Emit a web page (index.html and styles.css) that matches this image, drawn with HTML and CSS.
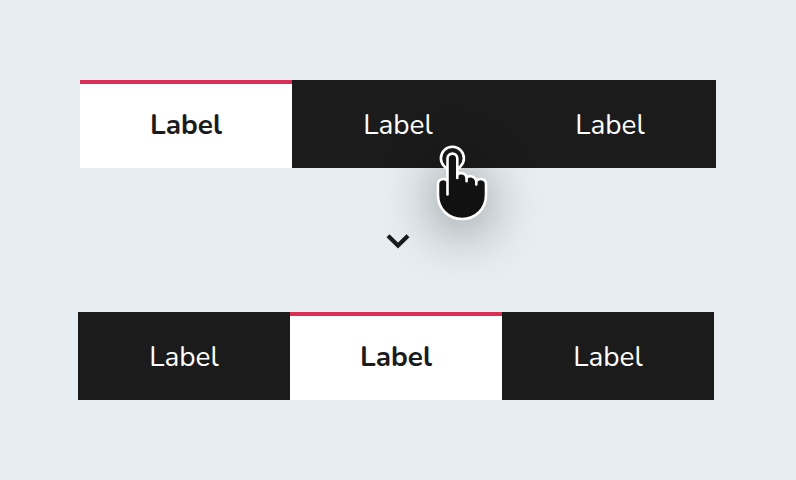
FILE: index.html
```html
<!DOCTYPE html>
<html lang="en"><head><meta charset="utf-8"><title>Tabs</title><link rel="stylesheet" href="styles.css"></head>
<body>
<main class="stage">
<nav class="tabs"><a class="tab active">Label</a><a class="tab">Label</a><a class="tab">Label</a></nav>
<svg class="chevron" width="24" height="16" viewBox="0 0 24 16"><path d="M2 3.800 12 13.600 22 3.800"/></svg>
<nav class="tabs second"><a class="tab">Label</a><a class="tab active">Label</a><a class="tab">Label</a></nav>
<svg class="pointer" width="64" height="84" viewBox="0 0 64 84">
<circle cx="22.400" cy="18.300" r="11.500"/>
<path class="hand" d="M17.500 54.500V18.500a4.900 4.900 0 0 1 9.800 0V34.500C29.500 32.300 35.500 32.500 36.600 37.500C39.500 35 45.300 36 46.300 41C49 37.700 56 38.500 56 44V55C56 69 45.500 79 32 79S8 69 8 55V44C8 38.500 15.500 37.500 17.500 41.500"/>
<path class="folds" d="M27.300 34V38M36.600 37.500V41.200M46.300 41V44.500"/>
</svg>
</main>
</body></html>
```
FILE: styles.css
```css
body{margin:0;background:#e7edf1;font-family:"Nunito",sans-serif}
.stage{position:relative;box-sizing:border-box;height:480px;padding:80px;display:flex;flex-direction:column;justify-content:space-between;align-items:center}
.tabs{display:flex;width:636px;height:88px}
.second{margin-right:4px}
.tab{flex:1;box-sizing:border-box;padding-top:2px;display:flex;align-items:center;justify-content:center;background:#1b1b1b;color:#fff;font:400 28px "Nunito","Noto Sans",sans-serif}
.active{background:#fff;color:#1b1b1b;font-weight:700;box-shadow:inset 0 4px #dc2d54}
.chevron{fill:none;stroke:#1b1b1b;stroke-width:4.200;overflow:visible}
.pointer{position:absolute;left:430px;top:140px;overflow:visible;fill:none;stroke:#fff;stroke-width:2.6;stroke-linecap:round;stroke-linejoin:round;filter:drop-shadow(0 10px 27px rgba(0,0,0,.48))}
.hand{fill:#111}
```
